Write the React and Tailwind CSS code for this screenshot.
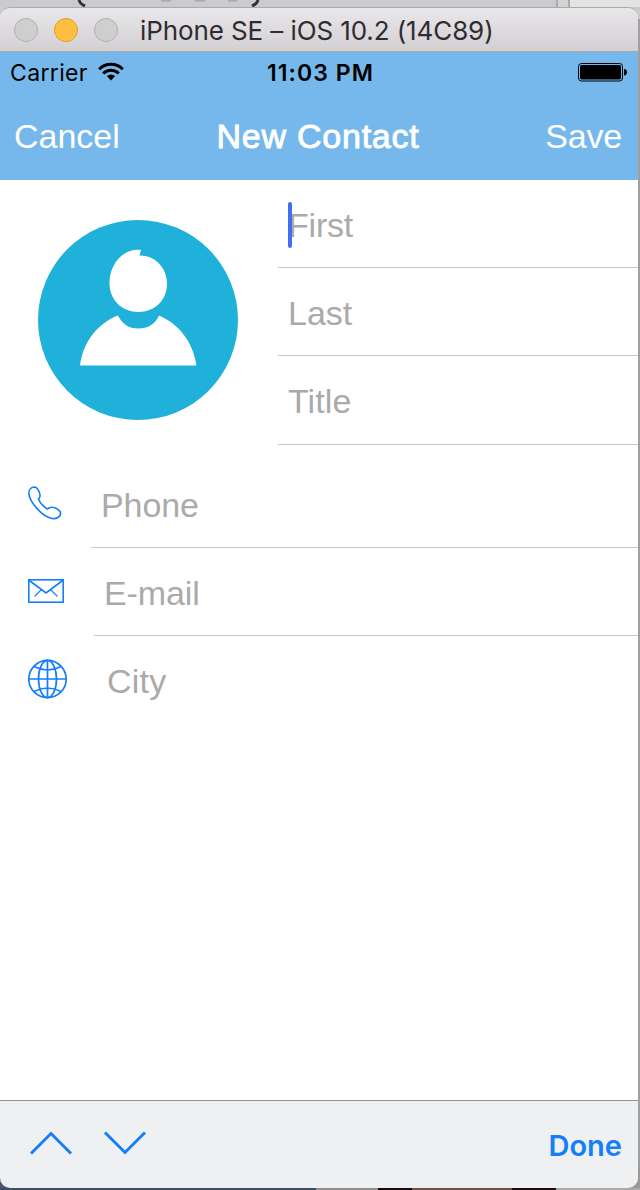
import React from 'react';

const sans = "font-['Liberation_Sans',Arial,sans-serif]";
const inter = "font-['Inter',sans-serif]";

function TitleBar() {
  return (
    <div className="flex h-[44px] shrink-0 items-center border-b border-[#aaa8aa] bg-linear-to-b from-[#e9e7e9] to-[#d2d0d2] pl-[14px]">
      <div className="flex gap-4">
        <span className="size-6 rounded-full border border-[#afaeb0] bg-[#d0cfd0]" />
        <span className="size-6 rounded-full border border-[#dfa023] bg-[#fdbe41]" />
        <span className="size-6 rounded-full border border-[#afaeb0] bg-[#d0cfd0]" />
      </div>
      <span className="ml-[22px] pt-[3px] font-['Inter',sans-serif] text-[26px] leading-[32px] tracking-[-0.1px] whitespace-nowrap text-[#2f2c30]">
        iPhone SE – iOS 10.2 (14C89)
      </span>
    </div>
  );
}

function StatusBar() {
  return (
    <div className={`grid h-10 grid-cols-[1fr_auto_1fr] items-center pr-[11px] pl-[10px] text-black ${inter}`}>
      <div className="flex items-center">
        <span className="w-[78px] pt-[2px] text-[23px] leading-[30px] tracking-[0.35px] whitespace-nowrap">Carrier</span>
        <svg className="ml-[10px]" width="26" height="20" viewBox="0 0 26 20" fill="none">
          <path d="M1.2 7.2a16.5 16.5 0 0 1 23.6 0" stroke="#000" strokeWidth="3" />
          <path d="M5.2 11.5a11 11 0 0 1 15.6 0" stroke="#000" strokeWidth="2.9" />
          <path d="M13 18.400 8.8 14.100a6 6 0 0 1 8.4 0Z" fill="#000" />
        </svg>
      </div>
      <span className="ml-[4px] pt-[2px] text-[23px] leading-[30px] font-semibold tracking-[1.1px] whitespace-nowrap">11:03 PM</span>
      <svg className="justify-self-end" width="50" height="20" viewBox="0 0 50 20">
        <rect x="1.5" y="1.5" width="44" height="17.500" rx="3" fill="none" stroke="#000" />
        <rect x="3" y="3" width="41" height="14.500" rx="1.8" fill="#000" />
        <path d="M47 7c1.500 0 3 1 3 3.200s-1.500 3.200-3 3.200Z" fill="#000" />
      </svg>
    </div>
  );
}

function NavBar() {
  return (
    <div className={`grid h-[88px] grid-cols-[1fr_auto_1fr] items-center pr-4 pl-[14px] pb-px text-[34px] leading-10 text-white ${sans}`}>
      <span>Cancel</span>
      <span className="tracking-[0.75px] [-webkit-text-stroke:0.9px_white]">New Contact</span>
      <span className="justify-self-end tracking-[-0.2px]">Save</span>
    </div>
  );
}

function Avatar() {
  return (
    <svg width="200" height="200" viewBox="0 0 200 200">
      <circle cx="100" cy="100" r="100" fill="#1fb1d9" />
      <path d="M103 30C86 27 71.500 44 71.500 63C71.500 80 84 92 100.500 92C117 92 129 80 129 63.500C129 47 116 35 101.500 35.500Z" fill="#fff" />
      <path d="M80 95.500C84 104 91 108.500 100 108.500C110 108.500 117.500 104 121 95.500C141 104 155 122 158.500 145.500H42C45 122 60 103 80 95.500Z" fill="#fff" />
    </svg>
  );
}

function PhoneIcon() {
  return (
    <svg className="-mt-[2px]" width="34" height="34" viewBox="0 0 34 34" fill="none" stroke="#147efb" strokeWidth="1.6" strokeLinejoin="round">
      <path d="M.8 7C.8 3.500 3.200 1.200 6.300 1C8.800 1 10 3.200 11.200 6C12.700 10 12 11 10.400 13.200C12.300 17.200 15.800 21 19.500 23C21.200 22 22.200 21 24.500 21.200C27.500 21.300 32.300 24.200 32.600 27C32.600 31 28.500 33.200 24 32.500C14 30.500 1.300 16 .8 7Z" />
    </svg>
  );
}

function MailIcon() {
  return (
    <svg className="-mt-[2px]" width="36" height="24" viewBox="0 0 36 24" fill="none" stroke="#147efb" strokeWidth="1.7">
      <rect x=".75" y=".75" width="34.500" height="22.500" />
      <path d="M1 1.200 18 14 35 1.200" />
      <path d="M13.500 10.500 6.500 17.500M22.500 10.500l7 7" strokeWidth="1.1" />
    </svg>
  );
}

function GlobeIcon() {
  return (
    <svg className="-mt-[2px]" width="40" height="40" viewBox="0 0 40 40" fill="none" stroke="#147efb" strokeWidth="1.7">
      <circle cx="19.500" cy="20" r="18.700" />
      <ellipse cx="19.500" cy="20" rx="9" ry="18.700" />
      <path d="M19.500 1.300v37.400M.8 20h37.400M6 7.500Q19.500 14.500 33 7.500M6 32.500Q19.500 25.500 33 32.500" />
    </svg>
  );
}

function Field({ label, className, focused }) {
  return (
    <div className={`flex h-[88px] items-center pt-[3px] text-[34px] leading-10 text-[#aaaaaa] ${className}`}>
      <span className="relative">
        {label}
        {focused && <span className="absolute top-[-3px] left-0 h-[46px] w-1 rounded-full bg-[#456eee]" />}
      </span>
    </div>
  );
}

function DetailRow({ icon, label, className }) {
  return (
    <div className="flex pl-7">
      <div className="flex h-[88px] items-center">{icon}</div>
      <Field label={label} className={className} />
    </div>
  );
}

function ContactForm() {
  return (
    <div className={`flex-1 bg-white ${sans}`}>
      <div className="flex">
        <div className="w-[278px] shrink-0 pt-10 pl-[38px]">
          <Avatar />
        </div>
        <div className="flex-1">
          <Field label="First" focused className="border-b border-[#c8c7cc] pl-[10px] tracking-[-0.2px]" />
          <Field label="Last" className="border-b border-[#c8c7cc] pl-[10px]" />
          <Field label="Title" className="mt-px border-b border-[#c8c7cc] pb-[2px] pl-[10px] tracking-[0.1px]" />
        </div>
      </div>
      <div className="pt-[15px]">
        <DetailRow icon={<PhoneIcon />} label="Phone" className="ml-[29px] flex-1 border-b border-[#c8c7cc] pl-[10px] tracking-[-0.1px]" />
        <DetailRow icon={<MailIcon />} label="E-mail" className="ml-[30px] flex-1 border-b border-[#c8c7cc] pl-[10px] tracking-[-0.1px]" />
        <DetailRow icon={<GlobeIcon />} label="City" className="ml-[29px] flex-1 pb-[2px] pl-[10px] tracking-[0.2px]" />
      </div>
    </div>
  );
}

function KeyboardToolbar() {
  return (
    <div className="flex h-[88px] shrink-0 items-center justify-between border-t border-[#929294] bg-[#eff0f2] pr-4 pl-[30px]">
      <svg className="-mt-1" width="116" height="24" viewBox="0 0 116 24" fill="none" stroke="#147efb" strokeWidth="3">
        <path d="M1 22.500 21 2.500l20 20M75 1.500l20 20L115 1.500" />
      </svg>
      <span className="pt-[3px] font-['Inter',sans-serif] text-[29px] leading-9 font-semibold text-[#147efb]">Done</span>
    </div>
  );
}

export default function App() {
  return (
    <div className="flex h-[1190px] w-[640px] flex-col overflow-hidden bg-linear-to-r from-[#cdccce] from-[556px] to-[#e3e3e3] to-[572px]">
      <div className="flex h-[7px] shrink-0 overflow-hidden">
        <div className="flex w-[556px] items-start bg-[#cbcacc]">
          <svg width="556" height="7" viewBox="0 0 556 7" fill="none">
            <path d="M79 0q1 4 6 6M258 0q-1 4-6 6" stroke="#34313a" strokeWidth="3" />
            <path d="M161 .5h10M195 .5h10M228 .5h9" stroke="#a9a7aa" strokeWidth="2" />
          </svg>
        </div>
        <div className="w-[14px] border-x-2 border-[#aaaaac] bg-[#d3d2d4]" />
        <div className="flex-1 bg-[#e4e3e4]" />
      </div>
      <div className="flex min-h-0 flex-1 bg-linear-to-r from-[#46586a] from-[316px] to-[#999999] to-[317px]">
        <div className="flex w-full flex-col bg-[linear-gradient(#cbcacc_0_12px,#a0a0a0_12px_1160px,transparent_1160px)]">
          <div className="mr-[2px] flex h-[1181px] flex-col overflow-hidden rounded-[10px] border-t border-[#aaa9ab]">
            <TitleBar />
            <div className="h-[128px] shrink-0 bg-[#76b8eb]">
              <StatusBar />
              <NavBar />
            </div>
            <ContactForm />
            <KeyboardToolbar />
          </div>
          <div className="flex h-[2px]">
            <div className="w-[316px] bg-[#3b5064]" />
            <div className="w-[62px] bg-[#8f8d8d]" />
            <div className="w-[34px] bg-[#180d0c]" />
            <div className="w-[100px] bg-[#744e49]" />
            <div className="w-[44px] bg-[#1b0e0d]" />
            <div className="flex-1 bg-[#aaaaaa]" />
          </div>
        </div>
      </div>
    </div>
  );
}
